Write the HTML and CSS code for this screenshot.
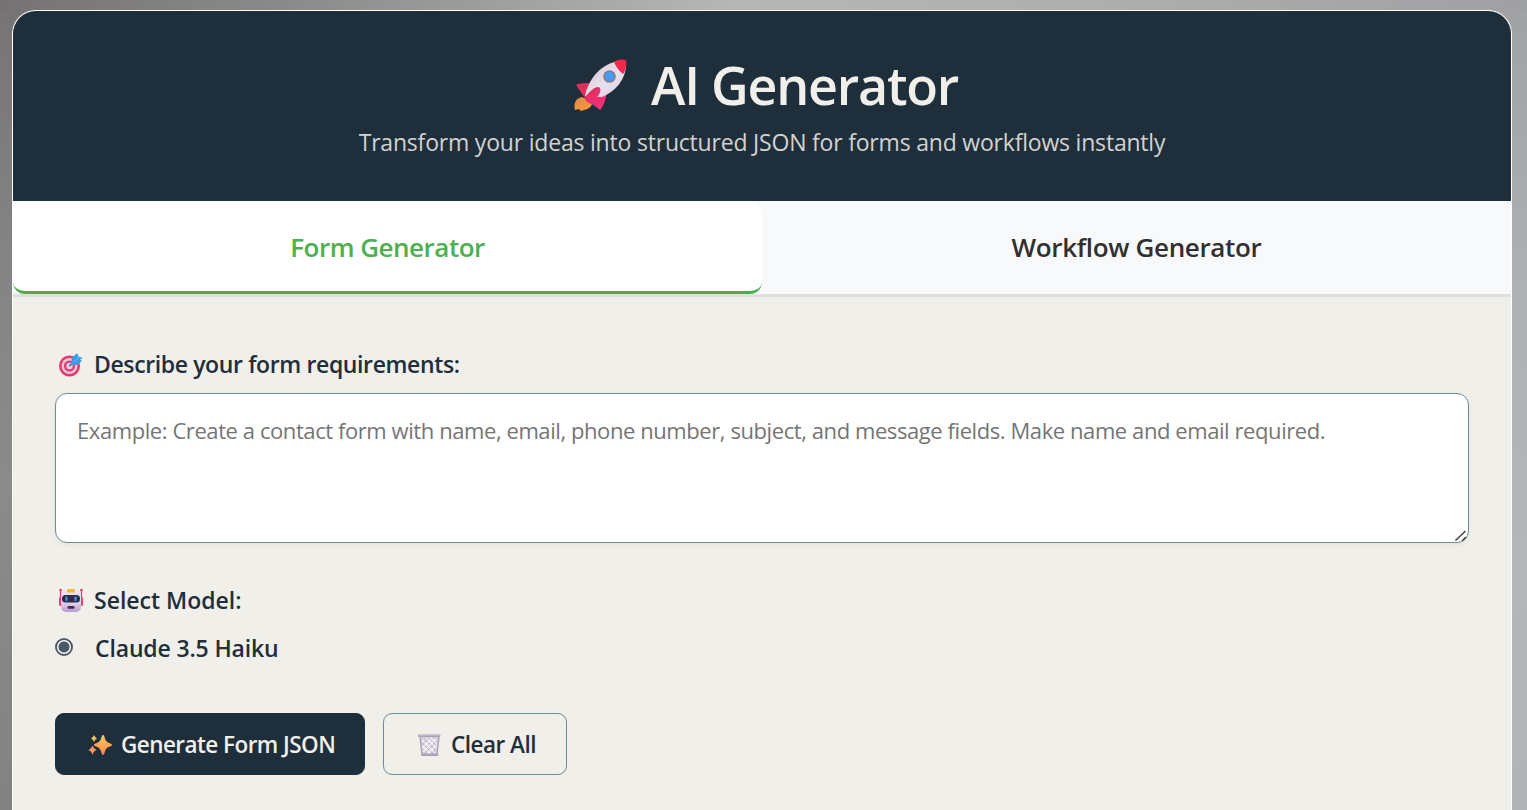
FILE: index.html
```html
<!DOCTYPE html>
<html lang="en">
<head>
<meta charset="utf-8">
<title>AI Generator</title>
<link rel="stylesheet" href="styles.css">
</head>
<body>
<main class="card">
  <header class="hero">
    <h1 class="title">
      <svg class="rocket" viewBox="0 0 54 54" aria-hidden="true">
        <defs>
          <linearGradient id="hull" x1="0" y1="0" x2="1" y2="1"><stop offset="0" stop-color="#cfc5ce"/><stop offset=".55" stop-color="#e9e0ec"/><stop offset="1" stop-color="#d9cbe2"/></linearGradient>
          <linearGradient id="fin" x1="0" y1="0" x2="1" y2="1"><stop offset="0" stop-color="#d5304f"/><stop offset="1" stop-color="#fb2f80"/></linearGradient>
          <linearGradient id="flame" x1="0" y1="0" x2="1" y2="1"><stop offset="0" stop-color="#d98a4a"/><stop offset="1" stop-color="#ff9a38"/></linearGradient>
        </defs>
        <path fill="url(#flame)" d="M8 38C3 39-1 43 1 51l4-1 2 2 3-1c5-1 8-4 9-8z"/>
        <path fill="#3f4a8c" d="M13 36l9 9-3 2-7-8z"/>
        <path fill="url(#fin)" d="M19 24C11 24 5 24 2 26l9 13 7-2zM33 33c-1 8-4 15-7 18l-10-8 6-7z"/>
        <path fill="url(#hull)" d="M11 37C14 22 25 5 45 2c3 0 6 1 7 3 0 15-10 27-24 33z"/>
        <path fill="#f5274f" d="M40 3c5-3 11-3 12-1s0 9-3 13c-4-3-7-7-9-12z"/>
        <path fill="url(#fin)" d="M13 43c-2-2-2-4-1-6 5-6 11-11 14-8 2 4-3 10-9 16z"/>
        <circle cx="35.500" cy="17.500" r="6.300" fill="#837f91"/>
        <circle cx="35.500" cy="17.500" r="4.600" fill="#459bf2"/>
      </svg>
      <span>AI Generator</span>
    </h1>
    <p class="subtitle">Transform your ideas into structured JSON for forms and workflows instantly</p>
  </header>
  <nav class="tabs">
    <button class="tab tab-active"><span class="t-form">Form Generator</span></button>
    <button class="tab"><span class="t-flow">Workflow Generator</span></button>
  </nav>
  <section class="content">
    <label class="label" for="requirements">
      <svg class="icon" viewBox="0 0 26 26" aria-hidden="true">
        <circle cx="11.500" cy="15" r="10.500" fill="#ea3568"/>
        <circle cx="11.500" cy="15" r="8" fill="#dccbdc"/>
        <circle cx="11.500" cy="15" r="5.600" fill="#e93a70"/>
        <circle cx="11.500" cy="15" r="3.200" fill="#e3cede"/>
        <path d="M11.500 15l6-6" stroke="#29649e" stroke-width="1.500"/>
        <path fill="#379ce8" d="M13 12l1-5 5-5 1.500 3.500L25 7l-3 1.500 2 1.500-5 4-4-.5-2 1z"/>
        <path d="M16 11l5-5" stroke="#65c5fb"/>
      </svg>
      <span class="t-describe">Describe your form requirements:</span>
    </label>
    <div class="field">
      <textarea class="textarea" id="requirements" placeholder="Example: Create a contact form with name, email, phone number, subject, and message fields. Make name and email required."></textarea>
      <svg class="grip" viewBox="0 0 14 12" aria-hidden="true"><path d="M1.500 10.500l10-9.500M8 11l4-4" fill="none" stroke="#4a4a4a" stroke-width="1.700"/></svg>
    </div>
    <div class="label label-model">
      <svg class="icon" viewBox="0 0 26 26" aria-hidden="true">
        <defs><linearGradient id="face" x1="0" y1="0" x2="0" y2="1"><stop offset="0" stop-color="#eee5f1"/><stop offset=".6" stop-color="#dfd0e8"/><stop offset="1" stop-color="#b999d2"/></linearGradient></defs>
        <path d="M2.500 3v12M23.500 3v12" stroke="#df3e70" stroke-width="1.300"/>
        <rect x="1" y="10" width="3" height="9" rx="1.500" fill="#f13d76"/>
        <rect x="22" y="10" width="3" height="9" rx="1.500" fill="#f13d76"/>
        <circle cx="2.500" cy="3" r="1.300" fill="#df3e60"/><circle cx="23.500" cy="3" r="1.300" fill="#df3e60"/>
        <rect x="3" y="4" width="20" height="21" rx="5" fill="url(#face)"/>
        <rect x="9" y="2" width="8" height="3.500" rx="1" fill="#f9b72e"/>
        <rect x="4" y="8" width="18" height="7.500" rx="3.500" fill="#322b4a"/>
        <rect x="7.500" y="9.500" width="2" height="4.500" rx="1" fill="#2fa9ef"/><rect x="16.500" y="9.500" width="2" height="4.500" rx="1" fill="#2fa9ef"/>
        <rect x="9.500" y="19" width="7" height="2.700" rx="1.300" fill="#3c304d"/>
      </svg>
      <span class="t-model">Select Model:</span>
    </div>
    <label class="choice">
      <input class="radio" type="radio" name="model" checked>
      <span class="t-haiku">Claude 3.5 Haiku</span>
    </label>
    <div class="actions">
      <button class="btn btn-primary">
        <svg class="icon" viewBox="0 0 26 26" aria-hidden="true">
          <defs><linearGradient id="spark" x1="0" y1="0" x2="0" y2="1"><stop offset="0" stop-color="#f8cc50"/><stop offset="1" stop-color="#ff845c"/></linearGradient></defs>
          <g fill="url(#spark)">
            <path d="M16 3q1 0 1.500 2c1 4 2 5 6 6.500q3 1.500 0 2.800c-4 1.400-5 2.700-6 6.700q-1.500 4-3 0c-1-4-2-5.300-6-6.700q-3-1.300 0-2.800c4-1.500 5-2.500 6-6.500Q15 3 16 3z"/>
            <path d="M7 3q1 2.700 3 3.500Q8 7.300 7 10 6 7.300 4 6.500 6 5.700 7 3zM5.500 13.500q1 3.500 4 4.500-3 1-4 5-1-4-4-5 3-1 4-4.500z"/>
          </g>
        </svg>
        <span class="t-generate">Generate Form JSON</span>
      </button>
      <button class="btn btn-outline">
        <svg class="icon" viewBox="0 0 26 26" aria-hidden="true">
          <path fill="#d3cdd9" d="M4 4h19l-2 19H6z"/>
          <path d="M6 8l13 13M10 6l11 11M15 6l6 6M7 14l8 8M20 7L7 20M16 6L6 16M21 12L11 22" stroke="#f8f5fa" stroke-width="1.200"/>
          <path d="M6 11l11 11M8 6l12 12M13 6l8 8M21 9L8 22M13 6l-6 6M21 16l-6 6" stroke="#b5abc5" stroke-width=".6"/>
          <path d="M4 5l2 18M23 5l-2 18" stroke="#a9a0b5" stroke-width="1.300"/>
          <rect x="2" y="2.500" width="22.500" height="2.500" rx="1" fill="#aaa1b6"/>
          <path d="M3 3h20" stroke="#d0c9d8"/>
          <rect x="5" y="21.500" width="17.500" height="2.500" rx="1" fill="#aca3b7"/>
        </svg>
        <span class="t-clear">Clear All</span>
      </button>
    </div>
  </section>
</main>
</body>
</html>
```
FILE: styles.css
```css
* { box-sizing: border-box; }
body {
  margin: 0;
  height: 810px;
  padding: 10px 15px 0 12px;
  overflow: hidden;
  font-family: "Open Sans", "Noto Sans", sans-serif;
  color: #1f2e3b;
  background:
    linear-gradient(90deg, #757272, #8a8989 18%, #b6b6b6 48%, #adadad 75%, #9fa0a2) top / 100% 12px no-repeat,
    linear-gradient(180deg, #767373, #848383 30%, #8c8b8b 60%, #838282) left / 50% 100% no-repeat,
    linear-gradient(180deg, #a0a1a3, #aeb0b4 35%, #b5b6ba 70%, #b2b3b6) right / 50% 100% no-repeat;
}
button, textarea { font-family: inherit; }
svg { display: block; flex: none; }
span { white-space: nowrap; }
.card {
  height: 800px;
  border: 1px solid #fff;
  border-bottom: 0;
  border-radius: 24px 24px 0 0;
  overflow: hidden;
  background: #f0efea;
}
.hero {
  height: 190px;
  padding-top: 39px;
  background: #1f2e3b;
  color: #f0efea;
}
.title {
  display: flex;
  justify-content: center;
  gap: 23px;
  margin: 0;
  padding-left: 8px;
  font-size: 52px;
  font-weight: 600;
  line-height: 70px;
  letter-spacing: -1.250px;
}
.rocket { width: 54px; height: 54px; margin-top: 9px; }
.subtitle {
  margin: 5px 0 0;
  text-align: center;
  white-space: nowrap;
  font-size: 23px;
  line-height: 34px;
  letter-spacing: -.2px;
  color: #d2d3d1;
}
.tabs {
  display: grid;
  grid-template-columns: 1fr 1fr;
  height: 96px;
  background: #f8f9fb;
  border-bottom: 3px solid #dfdfde;
}
.tab {
  padding: 2px 0 0;
  border: 0;
  border-bottom: 3px solid transparent;
  border-radius: 12px;
  background: transparent;
  font-size: 26px;
  font-weight: 600;
  color: #303030;
}
.tab-active { background: #fff; border-bottom-color: #4caf50; color: #4caf50; }
.t-form { letter-spacing: -.5px; }
.t-flow { letter-spacing: -.35px; }
.content { padding: 49px 42px 0; }
.label {
  display: flex;
  align-items: center;
  gap: 10px;
  height: 36px;
  padding-left: 3px;
  font-size: 23px;
  font-weight: 600;
}
.t-describe { letter-spacing: -.38px; }
.icon { width: 26px; height: 26px; }
.field { position: relative; margin-top: 11px; height: 150px; }
.textarea {
  display: block;
  width: 100%;
  height: 150px;
  padding: 19px 21px;
  border: 1px solid #668f96;
  border-radius: 12px;
  resize: none;
  background: #fff;
  box-shadow: 0 2px 5px rgba(0, 0, 0, .05);
  font-size: 22px;
  line-height: 35px;
  letter-spacing: -.42px;
}
.textarea::placeholder { color: #757575; }
.grip { position: absolute; right: 1px; bottom: 1px; width: 14px; height: 12px; }
.label-model { margin-top: 39px; }
.choice {
  display: flex;
  align-items: center;
  gap: 22px;
  height: 34px;
  margin-top: 13px;
  font-size: 23px;
  font-weight: 600;
}
.t-haiku { letter-spacing: -.15px; }
.radio {
  appearance: none;
  width: 18px;
  height: 18px;
  margin: 0 0 2px;
  border: 2px solid #4f5a65;
  border-radius: 50%;
  background: radial-gradient(circle, #4b5a69 5.200px, #fff 5.900px);
}
.actions { display: flex; gap: 18px; margin-top: 48px; }
.btn {
  display: flex;
  align-items: center;
  height: 62px;
  gap: 8px;
  padding: 1px 0 0 31px;
  border: 1px solid #1f2e3b;
  border-radius: 9px;
  font-size: 22.500px;
  font-weight: 600;
}
.btn-primary { width: 310px; background: #1f2e3b; color: #f0efea; }
.btn-outline { width: 184px; padding-left: 32px; gap: 9px; border-color: #668f96; background: transparent; color: #1f2e3b; }
.t-generate { letter-spacing: -.55px; }
.t-clear { letter-spacing: -.5px; }
```
